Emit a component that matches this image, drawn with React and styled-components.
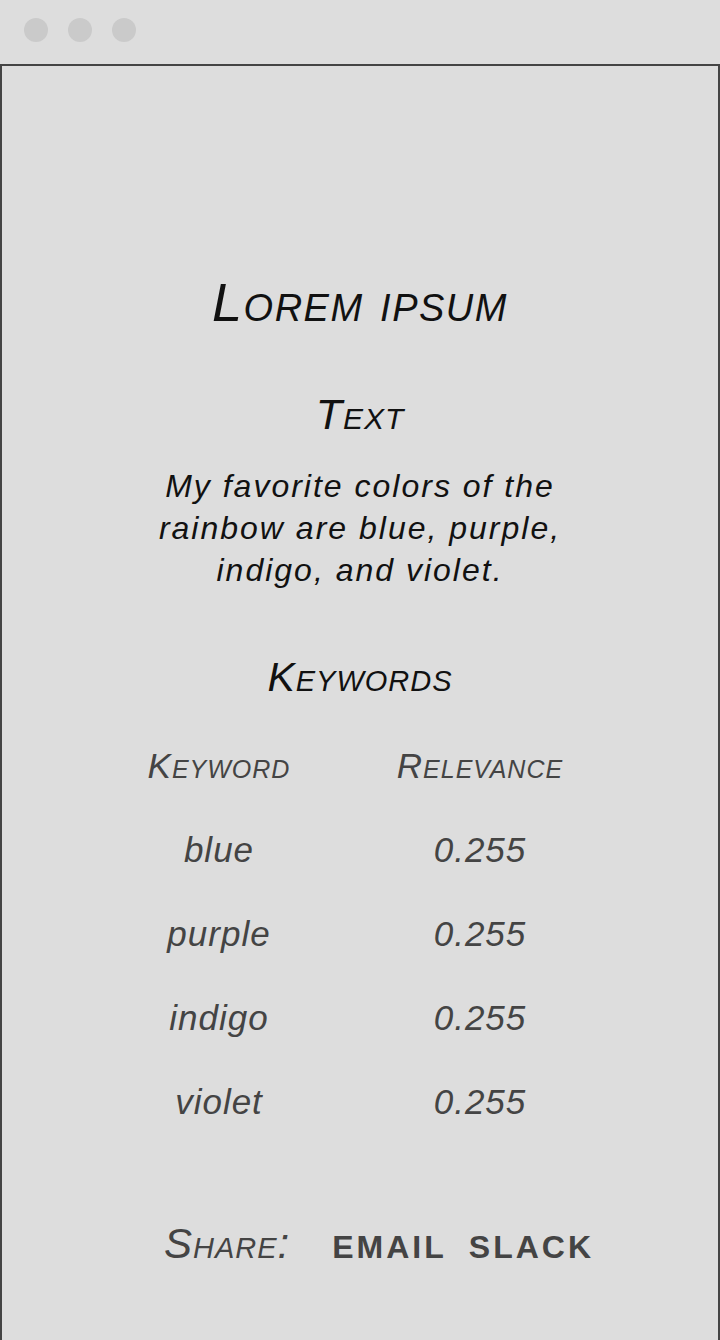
import React from "react";
import styled, { createGlobalStyle } from "styled-components";

const Global = createGlobalStyle`
  html, body { margin: 0; padding: 0; background: #dddddd; }
  body { font-family: "Liberation Sans", Arial, sans-serif; }
`;

const Page = styled.div`
  width: 720px;
  height: 1340px;
  display: flex;
  flex-direction: column;
  background: #dddddd;
  overflow: hidden;
`;

const TitleBar = styled.div`
  height: 64px;
  flex: none;
  display: flex;
  align-items: flex-start;
  gap: 20px;
  padding: 18px 0 0 24px;
  box-sizing: border-box;
`;

const Dot = styled.span`
  width: 24px;
  height: 24px;
  border-radius: 50%;
  background: #cacaca;
`;

const Frame = styled.main`
  flex: 1;
  border: 2px solid #444444;
  border-bottom: none;
  display: flex;
  flex-direction: column;
  align-items: center;
  padding-top: 204px;
  font-style: italic;
`;

const Title = styled.h1`
  margin: 0;
  font-size: 54px;
  line-height: 64px;
  font-weight: 400;
  font-variant: small-caps;
  letter-spacing: 1.5px;
  color: #111111;
`;

const Heading = styled.h2`
  margin: ${(p) => p.$top}px 0 0;
  font-size: ${(p) => p.$size}px;
  line-height: 50px;
  font-weight: 400;
  font-variant: small-caps;
  letter-spacing: 1px;
  color: #111111;
`;

const Paragraph = styled.p`
  margin: 26px 0 0;
  max-width: 440px;
  text-align: center;
  font-size: 32px;
  line-height: 42px;
  letter-spacing: 2px;
  color: #111111;
`;

const Table = styled.div`
  margin-top: 22px;
  margin-right: 21px;
  display: grid;
  grid-template-columns: 261px 261px;
`;

const Cell = styled.div`
  height: 84px;
  line-height: 84px;
  text-align: center;
  font-size: 35px;
  letter-spacing: 1px;
  color: #444444;
  font-variant: ${(p) => (p.$head ? "small-caps" : "normal")};
`;

const ShareRow = styled.div`
  margin-top: 75px;
  padding-left: 38px;
  display: flex;
  align-items: baseline;
  gap: 22px;
  color: #444444;
`;

const ShareLabel = styled.span`
  font-size: 42px;
  line-height: 50px;
  font-variant: small-caps;
  letter-spacing: 1px;
  margin-right: 20px;
`;

const ShareLink = styled.span`
  font-style: normal;
  font-weight: 700;
  font-size: 32px;
  letter-spacing: 3px;
`;

const rows = [
  ["blue", "0.255"],
  ["purple", "0.255"],
  ["indigo", "0.255"],
  ["violet", "0.255"],
];

export default function App() {
  return (
    <Page>
      <Global />
      <TitleBar>
        <Dot />
        <Dot />
        <Dot />
      </TitleBar>
      <Frame>
        <Title>Lorem ipsum</Title>
        <Heading $top={55} $size={43}>Text</Heading>
        <Paragraph>
          My favorite colors of the rainbow are blue, purple, indigo, and violet.
        </Paragraph>
        <Heading $top={61} $size={41}>Keywords</Heading>
        <Table>
          <Cell $head>Keyword</Cell>
          <Cell $head>Relevance</Cell>
          {rows.map(([k, v]) => (
            <React.Fragment key={k}>
              <Cell>{k}</Cell>
              <Cell>{v}</Cell>
            </React.Fragment>
          ))}
        </Table>
        <ShareRow>
          <ShareLabel>Share:</ShareLabel>
          <ShareLink>EMAIL</ShareLink>
          <ShareLink>SLACK</ShareLink>
        </ShareRow>
      </Frame>
    </Page>
  );
}
